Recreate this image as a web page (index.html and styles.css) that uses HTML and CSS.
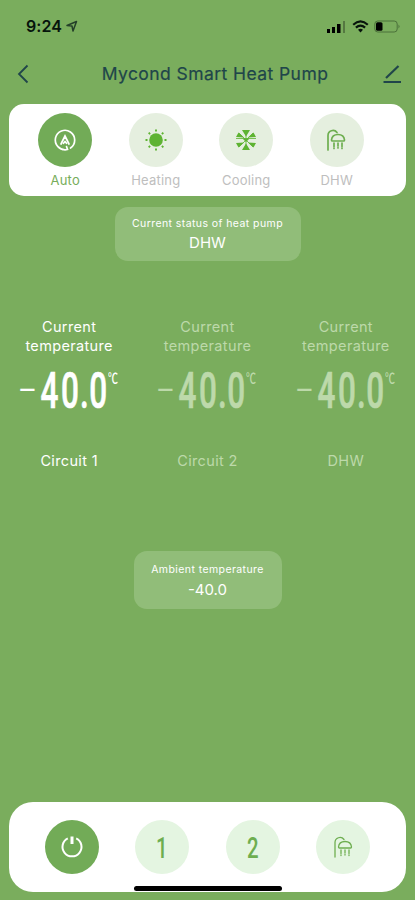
FILE: index.html
```
<!DOCTYPE html>
<html lang="en">
<head>
    <meta charset="UTF-8">
    <meta name="viewport" content="width=device-width, initial-scale=1.0">
    <title>Mycond Smart Heat Pump</title>
    <link rel="stylesheet" href="styles.css">
</head>
<body>
    <svg class="defs" width="0" height="0">
        <symbol id="shower" viewBox="0 0 20 22">
            <path d="M2 21V6.500A5 5 0 0 1 11 3.500M5.500 11Q6 5.500 12 5.500T18.500 11Q18.500 12 17.500 12H6.500Q5.500 12 5.500 11ZM8 14v3.500M8 19v.5M12 14v3M12 18.500v.5M16 14v3.500M16 19v.5" fill="none" stroke="currentColor" stroke-linecap="round"/>
        </symbol>
    </svg>
    <div class="screen">
        <div class="status-bar">
            <span class="time">9:24</span>
            <svg class="location" width="12" height="12" viewBox="0 0 12 12"><path d="M1 5.500L10.500 1.500L7 11L6 6Z" fill="none" stroke="currentColor" stroke-width="1.500" stroke-linejoin="round"/></svg>
            <div class="status-icons">
                <svg width="20" height="13" viewBox="0 0 20 13">
                    <path d="M0 9h3v4H0zM5 7h3v6H5zM10 4h3.500v9H10z"/>
                    <path d="M16 1h2v12h-2z" opacity=".3"/>
                </svg>
                <svg width="17" height="13" viewBox="0 0 17 13" fill="none" stroke="currentColor" stroke-width="2.200">
                    <path d="M1.200 4.700Q8.500-1.800 15.800 4.700M3.900 7.700Q8.500 3.700 13.100 7.700"/>
                    <path d="M6 9.700Q8.500 8 11 9.700L8.500 12.500Z" fill="currentColor" stroke="none"/>
                </svg>
                <svg width="26" height="13" viewBox="0 0 26 13">
                    <rect x=".8" y="1" width="22.400" height="11" rx="3" fill="none" stroke="#4b713a"/>
                    <rect x="2" y="2.300" width="6.500" height="8.400" rx="1.500"/>
                    <path d="M24.500 4.500q2 2 0 4z" fill="#4b713a"/>
                </svg>
            </div>
        </div>

        <header class="title-bar">
            <svg width="12" height="20" viewBox="0 0 12 20"><path d="M10.500 1.500L2 10L10.500 18.500"/></svg>
            <h1>Mycond Smart Heat Pump</h1>
            <svg width="20" height="20" viewBox="0 0 20 20"><path d="M.5 18H18" stroke-width="2"/><path d="M3 14L15.500 2" stroke-width="2.200"/></svg>
        </header>

        <nav class="modes">
            <div class="mode active">
                <div class="circle">
                    <svg width="24" height="24" viewBox="0 0 24 24" fill="none" stroke="currentColor" stroke-width="1.700"><path d="M13.500 21.600A9.700 9.700 0 1 1 17.500 20M13.500 18.500L14.500 21.400L12 22M8 16L12 8L16 16M10.500 15.300L12 13.500L13.500 15.300" stroke-linecap="round"/></svg>
                </div>
                <span>Auto</span>
            </div>
            <div class="mode">
                <div class="circle">
                    <svg class="bright" width="24" height="24" viewBox="0 0 24 24" stroke="currentColor"><circle cx="12" cy="12" r="6.800" fill="currentColor" stroke="none"/><path d="M12 1.500v2M12 20.500v2M1.500 12h2M20.500 12h2M4.700 4.700l1.400 1.400M17.900 17.900l1.400 1.400M4.700 19.300l1.400-1.400M17.900 6.100l1.400-1.400" stroke-width="1.900"/></svg>
                </div>
                <span>Heating</span>
            </div>
            <div class="mode">
                <div class="circle">
                    <svg class="bright" width="24" height="24" viewBox="0 0 24 24" fill="currentColor">
                        <path d="M8 2h8L12 8.500zM8 22h8L12 15.500zM2 9L4.500 4.500L10 9.500zM22 9L19.500 4.500L14 9.500zM2 15L4.500 19.500L10 14.500zM22 15L19.500 19.500L14 14.500zM8.500 10.500h7L12 14z"/>
                        <path d="M12 2v20M5 5L19 19M19 5L5 19M2 10.500h20" fill="none" stroke="currentColor" stroke-width=".8"/>
                    </svg>
                </div>
                <span>Cooling</span>
            </div>
            <div class="mode">
                <div class="circle">
                    <svg class="shower" width="20" height="22" stroke-width="1.700"><use href="#shower"/></svg>
                </div>
                <span>DHW</span>
            </div>
        </nav>

        <div class="info status">
            <small>Current status of heat pump</small>
            <strong>DHW</strong>
        </div>

        <section class="circuits">
            <div class="circuit active">
                <p>Current<br>temperature</p>
                <div class="reading">
                    <svg width="90" height="62" viewBox="0 0 90 62">
                        <text class="minus" x="0" y="39" textLength="19" lengthAdjust="spacingAndGlyphs">–</text>
                        <text class="number" transform="translate(22.500 47) scale(.63 1)" dx="0 4 2 .5">40.0</text>
                    </svg>
                    <svg width="12" height="36" viewBox="0 0 12 36">
                        <text class="unit" x="0" y="22" textLength="10" lengthAdjust="spacingAndGlyphs">℃</text>
                    </svg>
                </div>
                <p>Circuit 1</p>
            </div>
            <div class="circuit">
                <p>Current<br>temperature</p>
                <div class="reading">
                    <svg width="90" height="62" viewBox="0 0 90 62">
                        <text class="minus" x="0" y="39" textLength="19" lengthAdjust="spacingAndGlyphs">–</text>
                        <text class="number" transform="translate(22.500 47) scale(.63 1)" dx="0 4 2 .5">40.0</text>
                    </svg>
                    <svg width="12" height="36" viewBox="0 0 12 36">
                        <text class="unit" x="0" y="22" textLength="10" lengthAdjust="spacingAndGlyphs">℃</text>
                    </svg>
                </div>
                <p>Circuit 2</p>
            </div>
            <div class="circuit">
                <p>Current<br>temperature</p>
                <div class="reading">
                    <svg width="90" height="62" viewBox="0 0 90 62">
                        <text class="minus" x="0" y="39" textLength="19" lengthAdjust="spacingAndGlyphs">–</text>
                        <text class="number" transform="translate(22.500 47) scale(.63 1)" dx="0 4 2 .5">40.0</text>
                    </svg>
                    <svg width="12" height="36" viewBox="0 0 12 36">
                        <text class="unit" x="0" y="22" textLength="10" lengthAdjust="spacingAndGlyphs">℃</text>
                    </svg>
                </div>
                <p>DHW</p>
            </div>
        </section>

        <div class="info ambient">
            <small>Ambient temperature</small>
            <strong>-40.0</strong>
        </div>

        <footer class="controls">
            <div class="circle on">
                <svg width="24" height="24" viewBox="0 0 24 24" fill="none" stroke="currentColor" stroke-width="2"><path d="M7.800 3.300A9.500 9.500 0 1 0 16.200 3.300"/><path d="M12 1.500V9" stroke-width="3"/></svg>
            </div>
            <div class="circle">
                <svg class="digit" width="20" height="36" viewBox="0 0 20 36"><text transform="translate(4 28.500) scale(.68 1)">1</text></svg>
            </div>
            <div class="circle">
                <svg class="digit" width="20" height="36" viewBox="0 0 20 36"><text transform="translate(4 28.500) scale(.68 1)">2</text></svg>
            </div>
            <div class="circle">
                <svg width="20" height="22" stroke-width="1.300"><use href="#shower"/></svg>
            </div>
            <div class="home-indicator"></div>
        </footer>
    </div>
</body>
</html>
```

FILE: styles.css
```
* {
    box-sizing: border-box;
}
body {
    margin: 0;
    background-color: #7aad5d;
    font-family: Inter, "Noto Sans CJK SC", sans-serif;
    color: #fff;
}
.defs {
    position: absolute;
}
.screen {
    display: flex;
    flex-direction: column;
    align-items: center;
    height: 900px;
    overflow: hidden;
}
.status-bar {
    display: flex;
    align-items: center;
    width: 100%;
    height: 52px;
    padding: 0 15px 0 26px;
    color: #07140c;
}
.time {
    font-size: 16px;
    font-weight: 600;
    letter-spacing: 0.1px;
}
.location {
    margin-left: 4px;
    color: #244029;
}
.status-icons {
    display: flex;
    gap: 5px;
    margin-left: auto;
}
.title-bar {
    display: flex;
    align-items: center;
    width: 100%;
    height: 44px;
    padding: 0 12px 0 17px;
    color: #20454a;
}
.title-bar svg {
    fill: none;
    stroke: currentColor;
    stroke-width: 1.8;
}
h1 {
    flex: 1;
    margin: 0;
    padding-left: 18px;
    padding-bottom: 2px;
    font-size: 17.5px;
    font-weight: 400;
    letter-spacing: 0.43px;
    text-align: center;
    white-space: nowrap;
    -webkit-text-stroke: 0.2px;
}
.modes {
    display: flex;
    width: 397px;
    height: 92px;
    margin-top: 8px;
    padding: 9px 11px 0;
    border-radius: 15px;
    background-color: #fff;
}
.mode {
    display: flex;
    flex-direction: column;
    align-items: center;
    width: 90.5px;
    color: #bebebe;
    font-size: 13px;
    line-height: 16px;
    letter-spacing: 0.2px;
}
.mode span {
    margin-top: 5px;
}
.mode.active {
    color: #77ad5a;
}
.circle {
    display: flex;
    align-items: center;
    justify-content: center;
    width: 54px;
    height: 54px;
    border-radius: 50%;
    background-color: #e5efdf;
    color: #6eae50;
}
.bright {
    color: #5eb332;
}
.mode.active .circle,
.circle.on {
    background-color: #72ab57;
    color: #fff;
}
.shower {
    margin-right: 2px;
}
.info {
    display: flex;
    flex-direction: column;
    align-items: center;
    border-radius: 13px;
    background-color: #91bd79;
}
.info small {
    font-size: 10.5px;
    line-height: 14px;
    letter-spacing: 0.42px;
}
.info strong {
    font-size: 15px;
    font-weight: 400;
    line-height: 20px;
}
.status {
    width: 186px;
    height: 54px;
    margin-top: 11px;
    padding-top: 10px;
}
.status strong {
    margin-top: 2px;
}
.circuits {
    display: grid;
    grid-template-columns: repeat(3, 1fr);
    width: 100%;
    margin-top: 56px;
}
.circuit {
    display: flex;
    flex-direction: column;
    align-items: center;
    color: #bdd9aa;
    text-align: center;
}
.circuit.active {
    color: #fff;
}
.circuit p {
    margin: 0;
    font-size: 14.5px;
    line-height: 19px;
    letter-spacing: 0.35px;
}
.reading {
    display: flex;
    height: 62px;
    margin: 6px 0 28px;
    fill: currentColor;
    font-family: Roboto, "Noto Sans CJK SC", sans-serif;
}
.minus {
    font-size: 30px;
    font-weight: 400;
}
.number {
    font-size: 50px;
    font-weight: 500;
    stroke: currentColor;
    stroke-width: 0.7px;
}
.unit {
    font-family: "Noto Sans CJK SC", sans-serif;
    font-size: 14px;
    font-weight: 500;
}
.ambient {
    width: 148px;
    height: 58px;
    margin-top: 81px;
    padding-top: 12px;
}
.ambient strong {
    margin-top: 3px;
}
.controls {
    position: relative;
    display: flex;
    justify-content: center;
    gap: 36.5px;
    width: 397px;
    height: 90px;
    margin: auto 0 8px;
    padding-top: 18px;
    border-radius: 24px;
    background-color: #fff;
}
.controls .circle:not(.on) {
    background-color: #e4f5e1;
}
.digit {
    fill: currentColor;
    font-family: Roboto, sans-serif;
    font-size: 30px;
    font-weight: 500;
}
.home-indicator {
    position: absolute;
    bottom: 1px;
    left: 125px;
    width: 148px;
    height: 5px;
    border-radius: 3px;
    background-color: #000;
}
```
